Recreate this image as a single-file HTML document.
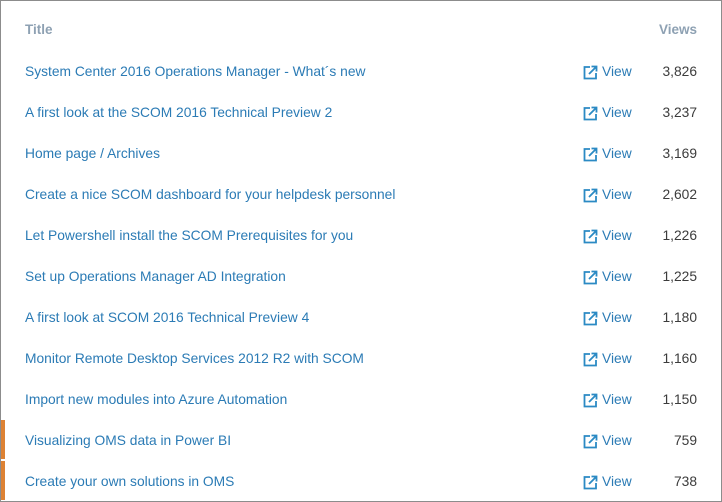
<!DOCTYPE html>
<html><head><style>
html,body{margin:0;padding:0;background:#fff}
body{width:722px;height:502px;position:relative;overflow:hidden;font-family:"Liberation Sans",sans-serif}
.frame{position:absolute;left:0;top:0;width:720px;height:500px;border:1px solid #8c8c8c}
.h{position:absolute;top:22px;font-size:13.5px;font-weight:bold;color:#8ea1b3}
.row{position:absolute;left:0;width:722px;height:41px}
.t{position:absolute;left:25px;top:0;line-height:41px;font-size:13.8px;color:#2b7bb5;white-space:nowrap}
.v{position:absolute;left:583px;top:13px;font-size:13.8px;color:#2b7bb5;line-height:16px}
.v svg{position:absolute;left:0;top:1px}
.v span{position:absolute;left:19px;top:0}
.n{position:absolute;right:25px;top:0;line-height:41px;font-size:13.8px;color:#3c3c3c}
.bar{position:absolute;left:1px;width:4px;background:#dd8234}
</style></head><body>
<div class="frame"></div>
<div class="h" style="left:25px">Title</div>
<div class="h" style="right:25px">Views</div>
<div class="bar" style="top:420px;height:39px"></div>
<div class="bar" style="top:461px;height:39px"></div>
<div class="row" style="top:51px"><div class="t">System Center 2016 Operations Manager - What´s new</div><div class="v"><svg width="15" height="15" viewBox="0 0 15 15"><path d="M7 2H1.5v11.5H13V8" fill="none" stroke="#2b8ac4" stroke-width="1.8"/><path d="M6 9L13 2M8.5 1.5H13.5V6.5" fill="none" stroke="#2b8ac4" stroke-width="1.8"/></svg><span>View</span></div><div class="n">3,826</div></div>
<div class="row" style="top:92px"><div class="t">A first look at the SCOM 2016 Technical Preview 2</div><div class="v"><svg width="15" height="15" viewBox="0 0 15 15"><path d="M7 2H1.5v11.5H13V8" fill="none" stroke="#2b8ac4" stroke-width="1.8"/><path d="M6 9L13 2M8.5 1.5H13.5V6.5" fill="none" stroke="#2b8ac4" stroke-width="1.8"/></svg><span>View</span></div><div class="n">3,237</div></div>
<div class="row" style="top:133px"><div class="t">Home page / Archives</div><div class="v"><svg width="15" height="15" viewBox="0 0 15 15"><path d="M7 2H1.5v11.5H13V8" fill="none" stroke="#2b8ac4" stroke-width="1.8"/><path d="M6 9L13 2M8.5 1.5H13.5V6.5" fill="none" stroke="#2b8ac4" stroke-width="1.8"/></svg><span>View</span></div><div class="n">3,169</div></div>
<div class="row" style="top:174px"><div class="t">Create a nice SCOM dashboard for your helpdesk personnel</div><div class="v"><svg width="15" height="15" viewBox="0 0 15 15"><path d="M7 2H1.5v11.5H13V8" fill="none" stroke="#2b8ac4" stroke-width="1.8"/><path d="M6 9L13 2M8.5 1.5H13.5V6.5" fill="none" stroke="#2b8ac4" stroke-width="1.8"/></svg><span>View</span></div><div class="n">2,602</div></div>
<div class="row" style="top:215px"><div class="t">Let Powershell install the SCOM Prerequisites for you</div><div class="v"><svg width="15" height="15" viewBox="0 0 15 15"><path d="M7 2H1.5v11.5H13V8" fill="none" stroke="#2b8ac4" stroke-width="1.8"/><path d="M6 9L13 2M8.5 1.5H13.5V6.5" fill="none" stroke="#2b8ac4" stroke-width="1.8"/></svg><span>View</span></div><div class="n">1,226</div></div>
<div class="row" style="top:256px"><div class="t">Set up Operations Manager AD Integration</div><div class="v"><svg width="15" height="15" viewBox="0 0 15 15"><path d="M7 2H1.5v11.5H13V8" fill="none" stroke="#2b8ac4" stroke-width="1.8"/><path d="M6 9L13 2M8.5 1.5H13.5V6.5" fill="none" stroke="#2b8ac4" stroke-width="1.8"/></svg><span>View</span></div><div class="n">1,225</div></div>
<div class="row" style="top:297px"><div class="t">A first look at SCOM 2016 Technical Preview 4</div><div class="v"><svg width="15" height="15" viewBox="0 0 15 15"><path d="M7 2H1.5v11.5H13V8" fill="none" stroke="#2b8ac4" stroke-width="1.8"/><path d="M6 9L13 2M8.5 1.5H13.5V6.5" fill="none" stroke="#2b8ac4" stroke-width="1.8"/></svg><span>View</span></div><div class="n">1,180</div></div>
<div class="row" style="top:338px"><div class="t">Monitor Remote Desktop Services 2012 R2 with SCOM</div><div class="v"><svg width="15" height="15" viewBox="0 0 15 15"><path d="M7 2H1.5v11.5H13V8" fill="none" stroke="#2b8ac4" stroke-width="1.8"/><path d="M6 9L13 2M8.5 1.5H13.5V6.5" fill="none" stroke="#2b8ac4" stroke-width="1.8"/></svg><span>View</span></div><div class="n">1,160</div></div>
<div class="row" style="top:379px"><div class="t">Import new modules into Azure Automation</div><div class="v"><svg width="15" height="15" viewBox="0 0 15 15"><path d="M7 2H1.5v11.5H13V8" fill="none" stroke="#2b8ac4" stroke-width="1.8"/><path d="M6 9L13 2M8.5 1.5H13.5V6.5" fill="none" stroke="#2b8ac4" stroke-width="1.8"/></svg><span>View</span></div><div class="n">1,150</div></div>
<div class="row" style="top:420px"><div class="t">Visualizing OMS data in Power BI</div><div class="v"><svg width="15" height="15" viewBox="0 0 15 15"><path d="M7 2H1.5v11.5H13V8" fill="none" stroke="#2b8ac4" stroke-width="1.8"/><path d="M6 9L13 2M8.5 1.5H13.5V6.5" fill="none" stroke="#2b8ac4" stroke-width="1.8"/></svg><span>View</span></div><div class="n">759</div></div>
<div class="row" style="top:461px"><div class="t">Create your own solutions in OMS</div><div class="v"><svg width="15" height="15" viewBox="0 0 15 15"><path d="M7 2H1.5v11.5H13V8" fill="none" stroke="#2b8ac4" stroke-width="1.8"/><path d="M6 9L13 2M8.5 1.5H13.5V6.5" fill="none" stroke="#2b8ac4" stroke-width="1.8"/></svg><span>View</span></div><div class="n">738</div></div>
</body></html>
